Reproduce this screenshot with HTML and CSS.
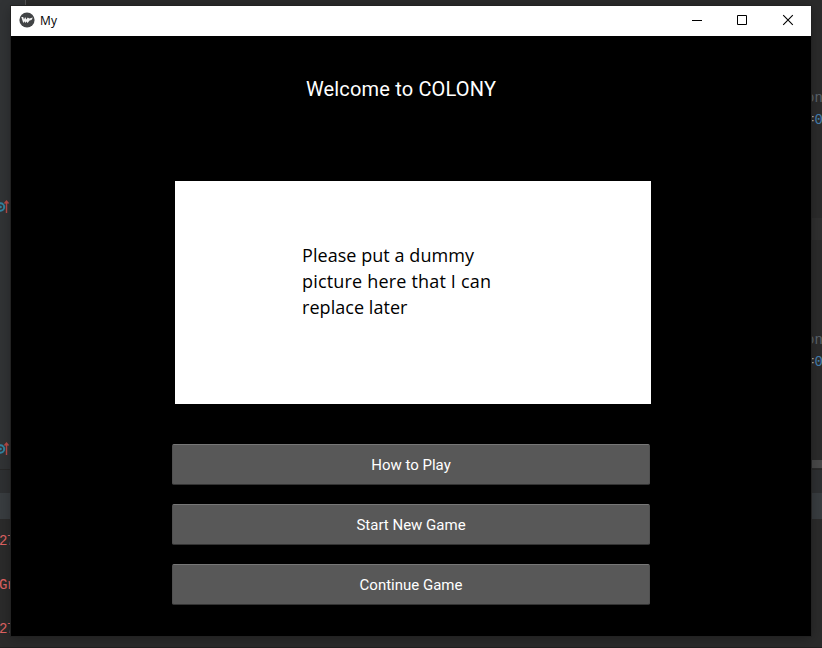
FILE: index.html
```html
<!DOCTYPE html>
<html lang="en">
<head>
<meta charset="utf-8">
<title>My</title>
<link rel="stylesheet" href="styles.css">
</head>
<body>
<div class="desktop">
  <div class="editor">
    <div class="gutter">
      <svg class="mark" width="11" height="16" viewBox="0 0 11 16"><circle cx="0.5" cy="8" r="3.7" fill="none" stroke="#33829f" stroke-width="2"/><circle cx="0.5" cy="8" r="1.3" fill="#33829f"/><path d="M6.5 14V2M4.5 4.5L6.5 2L8.5 4.5" fill="none" stroke="#b84b47" stroke-width="1.4"/></svg>
      <svg class="mark second" width="11" height="16" viewBox="0 0 11 16"><circle cx="0.5" cy="8" r="3.7" fill="none" stroke="#33829f" stroke-width="2"/><circle cx="0.5" cy="8" r="1.3" fill="#33829f"/><path d="M6.5 14V2M4.5 4.5L6.5 2L8.5 4.5" fill="none" stroke="#b84b47" stroke-width="1.4"/></svg>
    </div>
    <div class="code">
      <div class="snippet"><div class="dim">on</div><div>=<span class="num">0</span></div></div>
      <div class="current-line"></div>
      <div class="snippet"><div class="dim">on</div><div>=<span class="num">0</span></div></div>
      <div class="scrollbar"></div>
    </div>
  </div>
  <div class="tool-tabs"></div>
  <div class="tool-header"></div>
  <div class="console"><div>27</div><div>Gr</div><div>27</div></div>
</div>

<main class="window">
  <header class="titlebar">
    <svg class="logo" width="16" height="16" viewBox="0 0 16 16"><circle cx="8" cy="8" r="7.6" fill="#424446"/><path d="M2.3 5L4.2 5L5 7.6L6.2 5L7.4 7.6L8.7 5.6L10.3 6.6L13.9 5.4L12.5 8L10.6 8.4L8.6 11L7.5 9.4L6.2 11L5.5 9.3L4.3 10.9Z" fill="#f4f4f4"/></svg>
    <span class="name">My</span>
    <div class="controls">
      <svg width="46" height="30" viewBox="0 0 46 30"><path d="M18 14.5h10" stroke="#000"/></svg>
      <svg width="46" height="30" viewBox="0 0 46 30"><path d="M17.5 9.5h9v9h-9z" fill="none" stroke="#000"/></svg>
      <svg width="46" height="30" viewBox="0 0 46 30"><path d="M17.2 9.2l9.6 9.6M26.8 9.2l-9.6 9.6" stroke="#000" stroke-width="1.1"/></svg>
    </div>
  </header>
  <section class="screen">
    <h1 class="title">Welcome to COLONY</h1>
    <div class="picture"><p class="note"><span class="l1">Please put a dummy</span><br><span class="l2">picture here that I can</span><br><span class="l3">replace later</span></p></div>
    <div class="menu">
      <button>How to Play</button>
      <button>Start New Game</button>
      <button>Continue Game</button>
    </div>
  </section>
</main>
</body>
</html>
```
FILE: styles.css
```css
* { box-sizing: border-box; }
body { margin: 0; width: 822px; height: 648px; overflow: hidden; background: #2b2b2b; }

.desktop { height: 648px; display: flex; flex-direction: column; font: 14px/22px "Liberation Mono", monospace; color: #a0a5aa; }
.editor { display: flex; justify-content: space-between; height: 469px; }
.gutter { width: 26px; background: #313335; border-right: 1px solid #555; padding-top: 199px; }
.mark { display: block; }
.second { margin-top: 226px; }
.code { width: 14px; padding-top: 87px; }
.snippet { height: 44px; width: 18px; margin-left: -2px; white-space: nowrap; }
.dim { color: #5d656d; }
.num { color: #4580b0; }
.current-line { height: 22px; margin: 87px 0 89px; background: #303030; }
.scrollbar { height: 8px; margin-top: 87px; background: #4a4a4a; }
.tool-tabs { height: 24px; background: #2e3032; border-top: 1px solid #282828; }
.tool-header { height: 26px; background: #393d40; }
.console { height: 129px; padding-top: 11px; border-bottom: 1px solid #202020; color: #e06363; background: #2b2b2b; letter-spacing: -.6px; text-indent: -1px; }
.console div { height: 44px; }

.window { position: absolute; left: 11px; top: 6px; width: 800px; height: 630px; background: #000; box-shadow: 0 0 0 1px #222, 0 2px 12px rgba(0, 0, 0, .3); }
.titlebar { height: 30px; display: flex; align-items: center; padding-left: 8px; background: #fff; }
.logo { margin-top: -2px; }
.name { margin-left: 5px; font: 12px/16px "Open Sans", sans-serif; letter-spacing: .2px; color: #000; }
.controls { display: flex; margin: 0 -1px 0 auto; }
.screen { height: 600px; display: flex; flex-direction: column; align-items: center; font-family: Roboto, sans-serif; }
.title { margin: 41px 20px 0 0; font-size: 20px; font-weight: 400; line-height: 24px; letter-spacing: .17px; color: #fff; }
.picture { width: 476px; height: 223px; margin: 80px 0 0 4px; padding: 61px 0 0 127px; background: #fff; }
.note { margin: 0; font: 18px/26px "Open Sans", sans-serif; color: #000; white-space: nowrap; }
.l1, .l3 { letter-spacing: .05px; }
.l2 { letter-spacing: .18px; }
.menu { width: 478px; margin-top: 40px; display: flex; flex-direction: column; gap: 19px; }
.menu button { height: 41px; padding: 0; border: 1px solid #505050; border-top-color: #777; border-bottom-color: #333; border-radius: 2px; background: #585858; color: #fff; font: 15px/20px Roboto, sans-serif; }
```
